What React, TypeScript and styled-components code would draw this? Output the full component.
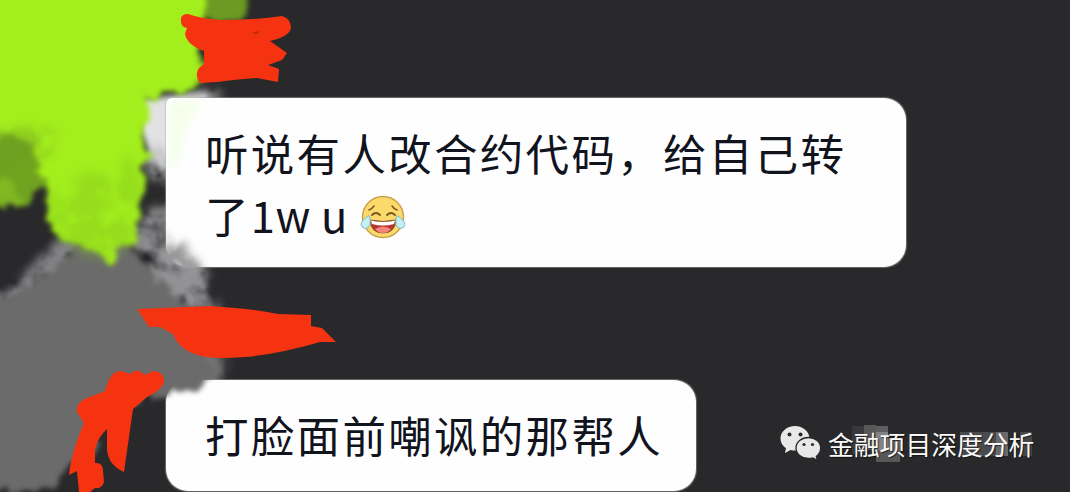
import React from "react";
import styled, { createGlobalStyle } from "styled-components";

const GlobalStyle = createGlobalStyle`
	body {
		margin: 0;
		background: #29292b;
		overflow: hidden;
	}
`;

const Screen = styled.main`
	position: relative;
	isolation: isolate;
	box-sizing: border-box;
	width: 1070px;
	height: 492px;
	padding: 98px 0 0 166px;
	display: flex;
	flex-direction: column;
	align-items: flex-start;
	gap: 113px;
	overflow: hidden;
	background: #29292b;
	font-family: "Noto Sans CJK SC", sans-serif;
`;

const Bubble = styled.div<{ width: number; height: number; squareTop?: boolean }>`
	box-sizing: border-box;
	flex: none;
	width: ${({ width }) => width}px;
	height: ${({ height }) => height}px;
	padding: 24px 0 0 39px;
	border-radius: ${({ squareTop }) => squareTop ? "6px 22px 22px 22px" : "22px"};
	background: #fefefe;
	box-shadow: 0 0 1px 0.5px rgba(170, 170, 170, 0.5);
`;

const Line = styled.div`
	display: flex;
	align-items: center;
	height: 62px;
	color: #11131d;
	font-size: 43.5px;
	line-height: 62px;
	letter-spacing: 2.3px;
	white-space: pre;
`;

const Latin = styled.span`
	font-size: 43.5px;
	letter-spacing: 0.5px;
`;

const Emoji = styled.svg`
	width: 46px;
	height: 46px;
	margin: 3px 0 0 12px;
`;

const Paint = styled.svg<{ behind?: boolean }>`
	position: absolute;
	inset: 0;
	z-index: ${({ behind }) => behind ? "-1" : "1"};
	pointer-events: none;
`;

const Watermark = styled.div`
	position: absolute;
	z-index: 2;
	left: 780px;
	top: 424px;
	height: 40px;
	display: flex;
	align-items: center;
	gap: 7px;
	color: #fafafa;
	font-size: 25.8px;
	line-height: 40px;
	white-space: nowrap;
	text-shadow: 1px 1px 1px rgba(0, 0, 0, 0.6);
`;

const WechatLogo = styled.svg`
	width: 41px;
	height: 36px;
	margin-top: -2px;
`;

const JoyFace = () => (
	<Emoji viewBox="0 0 46 46">
		<circle cx="23" cy="23" r="20.5" fill="#fbd96a" stroke="#c9a04a" strokeWidth="1.4" />
		<path d="M9 16q3-1 5-4M32 12q2 3 5 4" fill="none" stroke="#7b5523" strokeWidth="1.5" strokeLinecap="round" />
		<path d="M12 21q4-4 8 0M27 21q4-4 8 0" fill="none" stroke="#7b5523" strokeWidth="1.8" strokeLinecap="round" />
		<path d="M10 26q13 3 26 0-1 13-13 13T10 26z" fill="#b9342e" stroke="#86522c" />
		<path d="M11 26.5q12 3 24 0l-1 3.5q-11 3-22 0z" fill="#fff" />
		<path d="M15 35q8-5 16 0-3 4-8 4t-8-4z" fill="#f4837a" />
		<path d="M9 21.5q2 5 1 9-1 4-4.500 4t-4.500-4q0-4 8-9z" fill="#c5eff3" stroke="#7fb9c1" />
		<path d="M37 21.5q-2 5-1 9 1 4 4.500 4t4.500-4q0-4-8-9z" fill="#c5eff3" stroke="#7fb9c1" />
	</Emoji>
);

const BrushFilters = () => (
	<defs>
		<filter id="brush" filterUnits="userSpaceOnUse" x="-60" y="-60" width="400" height="620" colorInterpolationFilters="sRGB">
			<feTurbulence type="fractalNoise" baseFrequency="0.05" numOctaves="4" seed="7" />
			<feDisplacementMap in="SourceGraphic" scale="26" xChannelSelector="R" yChannelSelector="G" />
			<feGaussianBlur stdDeviation="2.600" />
		</filter>
		{/* breaks a soft shape up with noise so it reads as a dry brush */}
		<filter id="cloud" filterUnits="userSpaceOnUse" x="-60" y="-60" width="400" height="620" colorInterpolationFilters="sRGB">
			<feTurbulence type="fractalNoise" baseFrequency="0.04" numOctaves="4" seed="12" result="noise" />
			<feDisplacementMap in="SourceGraphic" in2="noise" scale="26" xChannelSelector="G" yChannelSelector="R" result="bent" />
			<feGaussianBlur in="bent" stdDeviation="5" result="soft" />
			<feColorMatrix in="noise" type="matrix" values="0 0 0 0 0  0 0 0 0 0  0 0 0 0 0  2.600 0 0 0 -0.5" result="mask" />
			<feComposite in="soft" in2="mask" operator="in" />
			<feGaussianBlur stdDeviation="1.300" />
		</filter>
		<filter id="soft" filterUnits="userSpaceOnUse" x="-60" y="-60" width="400" height="620">
			<feGaussianBlur stdDeviation="3" />
		</filter>
	</defs>
);

// Smears that run underneath the bubbles
const BackPaint = () => (
	<Paint behind width="1070" height="492" viewBox="0 0 1070 492">
		<BrushFilters />
		<path d="M138 100L184 94 206 92 212 98 200 108H172V158L163 170 152 158 140 130z" fill="#e2e2e4" filter="url(#soft)" />
		<g filter="url(#cloud)">
			<path d="M150 150H176V184L150 176z" fill="#c4c4c6" />
			<path d="M130 214L176 204V282L130 272z" fill="#88888b" />
			<path d="M-10 296L26 272 52 246 74 240 100 262 60 284-10 316z" fill="#838386" />
			<path d="M140 244L190 254 214 276 218 308 180 314 140 290z" fill="#929295" />
			<path d="M190 335L226 362 218 386 176 396z" fill="#777779" />
			<path d="M184 84L214 86 224 100 190 100z" fill="#a8a8aa" />
		</g>
		<g filter="url(#brush)">
			<path d="M-20 302L20 288 56 268 84 248 130 250 152 268 166 290 188 310 205 350 216 373 204 390 168 398 142 401 121 412 100 426 92 450 68 470 52 484 30 490-20 496z" fill="#6b6b6b" />
			<path d="M-20 128L46 130 42 180 33 198 20 210-20 204z" fill="#71a31f" />
			<path d="M-20 176L12 182 26 206-20 202z" fill="#80b722" />
			<path d="M186-20H244L242 22 190 26z" fill="#6d9a22" />
			<path d="M170 60H204V84L172 94z" fill="#7bb024" />
			<path d="M-20-20H208L204 20 200 42 198 82 182 92 146 99 145 135 142 184 139 224 132 248 107 258 80 250 60 238 50 216 47 190 36 162 33 140-20 135z" fill="#a3ee1d" />
		</g>
		<g filter="url(#cloud)">
			<path d="M46 190L140 160 140 240 105 262 60 244z" fill="#7fbf1e" opacity="0.35" />
			<path d="M-10 130L50 128 50 160-10 170z" fill="#6e9a22" opacity="0.4" />
		</g>
	</Paint>
);

// Smears over the bubble corners, with the red marker on top
const FrontPaint = () => (
	<Paint width="1070" height="492" viewBox="0 0 1070 492">
		<path d="M169 101H202L186 128 180 160 169 170z" fill="#f1ffe0" opacity="0.6" filter="url(#soft)" />
		<g filter="url(#cloud)">
			<path d="M162 226L176 242 188 256 204 266 204 276 160 276z" fill="#98989a" />
		</g>
		<path d="M160 372H215L205 384 188 389 172 395 158 400z" fill="#6b6b6b" filter="url(#brush)" />
		<g fill="#f63310">
			<path d="M181 21Q180 14 188 14Q202 19 221 20Q255 20 282 16Q290 18 291 27Q291 36 270 41L287 53 282 60 268 65 279 69 278 82 257 78Q230 80 218 82L200 83Q194 75 199 68L204 64 204 51Q187 45 185 34L187 28Q181 27 181 21z" />
			<path d="M137 309L210 306Q255 309 278 314L311 315 311 326 322 328 336 342 320 342Q275 355 244 357Q220 359 206 357Q184 353 176 340L173 334 160 327 149 327z" />
			<path d="M105 391Q110 371 121 371L130 374Q138 367 144 375L154 371Q165 372 164 383Q160 391 147 397L133 409 124 472Q108 465 107 449L107 429Q98 437 95 449L95 463Q103 462 103 471L104 482Q102 489 95 488L90 492H79L77 471 69 475Q71 454 84 423L77 412Q75 402 90 397z" />
		</g>
		<path d="M251 33l9-2-3 3z" fill="#b9280f" />
	</Paint>
);

// Faint mosaic left behind the watermark
const Mosaic = () => (
	<Paint width="1070" height="492" viewBox="0 0 1070 492">
		<g fill="#fff">
			<path d="M864 425h12v7h12v18h-24z" opacity="0.22" />
			<path d="M852 426h12v28h-12z" opacity="0.08" />
			<path d="M876 450h24v12h-24z" opacity="0.22" />
			<path d="M876 426h12v24h-12z" opacity="0.25" />
			<path d="M888 438h12v12h-12z" opacity="0.3" />
			<path d="M960 432h36v24h-36z" opacity="0.16" />
			<path d="M996 432h12v24h-12z" opacity="0.3" />
			<path d="M1020 432h12v24h-12z" opacity="0.14" />
		</g>
	</Paint>
);

const App: React.FC = () => (
	<>
		<GlobalStyle />
		<Screen>
			<BackPaint />
			<Bubble width={740} height={169} squareTop>
				<Line>听说有人改合约代码，给自己转</Line>
				<Line>
					了<Latin>1w u</Latin>
					<JoyFace />
				</Line>
			</Bubble>
			<Bubble width={530} height={111}>
				<Line>打脸面前嘲讽的那帮人</Line>
			</Bubble>
			<FrontPaint />
			<Mosaic />
			<Watermark>
				<WechatLogo viewBox="0 0 41 36">
					<path d="M15 1C7 1 .5 6.5.5 13.500c0 4 2 7.500 5.500 9.800L5 28l5.500-3c1.500.4 3 .6 5 .6 8 0 14-5 14-12S23 1 15 1z" fill="#e8e8e8" />
					<path d="M28.500 12.500C21.500 12.500 16 17 16 23s5.500 10.500 12.500 10.500c1.500 0 3-.2 4.300-.6l4.700 2.500-1.200-4c2.700-2 4.400-5 4.400-8.400 0-6-5.500-10.500-12.200-10.500z" fill="#e8e8e8" stroke="#29292b" strokeWidth="1.3" />
					<circle cx="9.500" cy="9.500" r="2" fill="#29292b" />
					<circle cx="20.500" cy="9.500" r="2" fill="#29292b" />
					<circle cx="24" cy="19.500" r="1.600" fill="#29292b" />
					<circle cx="32.500" cy="19.500" r="1.600" fill="#29292b" />
				</WechatLogo>
				金融项目深度分析
			</Watermark>
		</Screen>
	</>
);

export default App;
